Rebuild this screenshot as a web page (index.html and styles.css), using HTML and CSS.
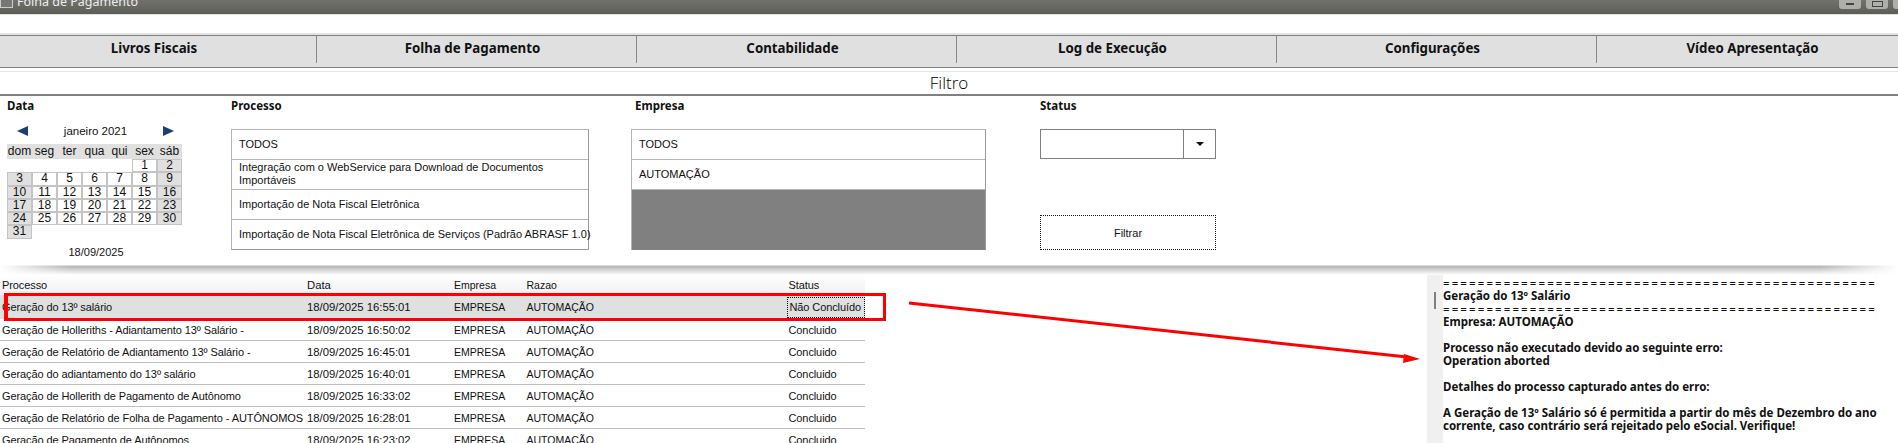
FILE: index.html
```html
<!DOCTYPE html>
<html lang="pt-BR">
<head>
  <meta charset="UTF-8" />
  <title>Folha de Pagamento</title>
  <link rel="stylesheet" href="styles.css">
</head>
<body>
  <div class="titlebar">
    <div class="title-left">
      <span class="app-icon"></span>
      <span>Folha de Pagamento</span>
    </div>
    <div class="win-buttons">
      <span class="win-btn"><span class="min-glyph"></span></span>
      <span class="win-btn"><span class="max-glyph"></span></span>
      <span class="win-btn"></span>
    </div>
  </div>

  <div class="menu">
    <div class="menu-item">Livros Fiscais</div>
    <div class="menu-item">Folha de Pagamento</div>
    <div class="menu-item">Contabilidade</div>
    <div class="menu-item">Log de Execução</div>
    <div class="menu-item">Configurações</div>
    <div class="menu-item">Vídeo Apresentação</div>
  </div>

  <div class="filter-title">Filtro</div>

  <div class="filter">
    <div class="col col-data">
      <div class="col-label">Data</div>
      <div class="cal-head">
        <span class="arrow-left"></span>
        <span>janeiro 2021</span>
        <span class="arrow-right"></span>
      </div>
      <div class="cal-grid">
        <div class="dow">dom</div><div class="dow">seg</div><div class="dow">ter</div><div class="dow">qua</div><div class="dow">qui</div><div class="dow">sex</div><div class="dow">sáb</div>
        <div class="blank"></div><div class="blank"></div><div class="blank"></div><div class="blank"></div><div class="blank"></div><div class="day">1</div><div class="day we">2</div>
        <div class="day we">3</div><div class="day">4</div><div class="day">5</div><div class="day">6</div><div class="day">7</div><div class="day">8</div><div class="day we">9</div>
        <div class="day we">10</div><div class="day">11</div><div class="day">12</div><div class="day">13</div><div class="day">14</div><div class="day">15</div><div class="day we">16</div>
        <div class="day we">17</div><div class="day">18</div><div class="day">19</div><div class="day">20</div><div class="day">21</div><div class="day">22</div><div class="day we">23</div>
        <div class="day we">24</div><div class="day">25</div><div class="day">26</div><div class="day">27</div><div class="day">28</div><div class="day">29</div><div class="day we">30</div>
        <div class="day we">31</div>
      </div>
      <div class="cal-date">18/09/2025</div>
    </div>

    <div class="col col-processo">
      <div class="col-label">Processo</div>
      <div class="listbox">
        <div class="list-row">TODOS</div>
        <div class="list-row">Integração com o WebService para Download de Documentos<br>Importáveis</div>
        <div class="list-row">Importação de Nota Fiscal Eletrônica</div>
        <div class="list-row">Importação de Nota Fiscal Eletrônica de Serviços (Padrão ABRASF 1.0)</div>
      </div>
    </div>

    <div class="col col-empresa">
      <div class="col-label">Empresa</div>
      <div class="listbox">
        <div class="list-row">TODOS</div>
        <div class="list-row">AUTOMAÇÃO</div>
      </div>
    </div>

    <div class="col col-status">
      <div class="col-label">Status</div>
      <div class="combo">
        <span class="combo-text"></span>
        <span class="combo-btn"><span class="combo-arrow"></span></span>
      </div>
      <div class="filter-btn">Filtrar</div>
    </div>
  </div>

  <div class="divider"></div>

  <div class="results">
    <div class="grid">
      <div class="row row-head">
        <span class="c-proc">Processo</span><span class="c-data">Data</span><span class="c-emp">Empresa</span><span class="c-raz">Razao</span><span class="c-st">Status</span>
      </div>
      <div class="row row-sel">
        <span class="c-proc">Geração do 13º salário</span><span class="c-data">18/09/2025 16:55:01</span><span class="c-emp">EMPRESA</span><span class="c-raz">AUTOMAÇÃO</span><span class="c-st"><span class="focus-cell">Não Concluído</span></span>
      </div>
      <div class="row">
        <span class="c-proc">Geração de Holleriths - Adiantamento 13º Salário -</span><span class="c-data">18/09/2025 16:50:02</span><span class="c-emp">EMPRESA</span><span class="c-raz">AUTOMAÇÃO</span><span class="c-st">Concluido</span>
      </div>
      <div class="row">
        <span class="c-proc">Geração de Relatório de Adiantamento 13º Salário -</span><span class="c-data">18/09/2025 16:45:01</span><span class="c-emp">EMPRESA</span><span class="c-raz">AUTOMAÇÃO</span><span class="c-st">Concluido</span>
      </div>
      <div class="row">
        <span class="c-proc">Geração do adiantamento do 13º salário</span><span class="c-data">18/09/2025 16:40:01</span><span class="c-emp">EMPRESA</span><span class="c-raz">AUTOMAÇÃO</span><span class="c-st">Concluido</span>
      </div>
      <div class="row">
        <span class="c-proc">Geração de Hollerith de Pagamento de Autônomo</span><span class="c-data">18/09/2025 16:33:02</span><span class="c-emp">EMPRESA</span><span class="c-raz">AUTOMAÇÃO</span><span class="c-st">Concluido</span>
      </div>
      <div class="row">
        <span class="c-proc">Geração de Relatório de Folha de Pagamento - AUTÔNOMOS</span><span class="c-data">18/09/2025 16:28:01</span><span class="c-emp">EMPRESA</span><span class="c-raz">AUTOMAÇÃO</span><span class="c-st">Concluido</span>
      </div>
      <div class="row">
        <span class="c-proc">Geração de Pagamento de Autônomos</span><span class="c-data">18/09/2025 16:23:02</span><span class="c-emp">EMPRESA</span><span class="c-raz">AUTOMAÇÃO</span><span class="c-st">Concluido</span>
      </div>
    </div>

    <div class="log">
      <div class="log-scroll"><span class="log-thumb"></span></div>
      <div class="log-text">
        <div class="log-sep">==================================================</div>
        <div>Geração do 13º Salário</div>
        <div class="log-sep">==================================================</div>
        <div>Empresa: AUTOMAÇÃO</div>
        <div>&nbsp;</div>
        <div>Processo não executado devido ao seguinte erro:</div>
        <div>Operation aborted</div>
        <div>&nbsp;</div>
        <div>Detalhes do processo capturado antes do erro:</div>
        <div>&nbsp;</div>
        <div>A Geração de 13º Salário só é permitida a partir do mês de Dezembro do ano<br>corrente, caso contrário será rejeitado pelo eSocial. Verifique!</div>
      </div>
    </div>
  </div>

  <!-- annotation drawn over the screenshot -->
  <div class="mark-box"></div>
  <svg class="mark-arrow" width="520" height="70" viewBox="0 0 520 70">
    <line x1="4" y1="5" x2="502" y2="59" stroke="#fe0000" stroke-width="3"/>
    <polygon points="515,61 499,56 498,65" fill="#fe0000"/>
  </svg>
</body>
</html>
```

FILE: styles.css
```css
html, body {
  margin: 0;
  padding: 0;
}

body {
  position: relative;
  width: 1898px;
  height: 443px;
  overflow: hidden;
  background-color: #fff;
  font-family: "Liberation Sans", sans-serif;
  font-size: 11px;
  color: #111;
}

.titlebar {
  display: flex;
  justify-content: space-between;
  height: 15px;
  background: linear-gradient(#72726d, #5d5d57);
  border-bottom: 1px solid #e0e0e0;
  box-sizing: border-box;
  color: #eee;
  font-family: "Noto Sans", sans-serif;
  font-size: 12.5px;
  overflow: hidden;
}

.title-left {
  display: flex;
  gap: 4px;
  height: 14px;
  margin-top: -5px;
  line-height: 14px;
}

.app-icon {
  width: 11px;
  height: 11px;
  border: 1px solid #ccc;
  background-color: #777;
}

.win-buttons {
  display: flex;
  gap: 5px;
  margin-right: -17px;
}

.win-btn {
  display: flex;
  justify-content: center;
  width: 22px;
  height: 9px;
  padding-top: 3px;
  background-color: #aeaeaa;
  border-radius: 0 0 3px 3px;
  box-sizing: border-box;
}

.min-glyph {
  width: 8px;
  height: 2px;
  background-color: #444;
}

.max-glyph {
  width: 9px;
  height: 4px;
  margin-top: -2px;
  border: 1px solid #444;
}

.menu {
  display: grid;
  grid-template-columns: 317px repeat(5, 320px);
  align-items: start;
  height: 33px;
  margin-top: 20px;
  background-color: #e0e0e0;
  border-top: 1px solid #808080;
  border-bottom: 1px solid #808080;
  box-shadow: 0 -2px 0 #e4e4e4;
  box-sizing: border-box;
  font-family: "Noto Sans", sans-serif;
  font-size: 13.3px;
  font-weight: bold;
}

.menu-item {
  display: flex;
  align-items: center;
  justify-content: center;
  height: 27px;
  padding: 0 8px 4px 0;
  border-right: 1px solid #888;
  box-sizing: border-box;
}

.filter-title {
  height: 25px;
  margin-top: 3px;
  font-family: "Open Sans", sans-serif;
  font-size: 17px;
  font-weight: 300;
  line-height: 22px;
  text-align: center;
  color: #000;
  border-top: 1px solid #e4e4e4;
  border-bottom: 2px solid #808080;
  box-sizing: border-box;
}

.filter {
  display: flex;
  height: 169px;
  padding-top: 2px;
  box-sizing: border-box;
}

.col {
  flex: none;
}

.col-label {
  height: 16px;
  font-family: "Noto Sans", sans-serif;
  font-size: 11.5px;
  font-weight: bold;
  line-height: 16px;
}

.col-data {
  width: 231px;
  padding-left: 7px;
  box-sizing: border-box;
}

.col-processo {
  width: 400px;
}

.col-empresa {
  width: 409px;
}

.col-empresa .col-label {
  padding-left: 4px;
}

.col-status {
  width: 176px;
}

.cal-head {
  display: flex;
  align-items: center;
  justify-content: space-between;
  width: 167px;
  height: 20px;
  margin-top: 7px;
  padding-left: 10px;
  box-sizing: border-box;
  font-size: 11.5px;
}

.arrow-left {
  border-top: 5px solid transparent;
  border-bottom: 5px solid transparent;
  border-right: 11px solid #1c3f73;
}

.arrow-right {
  border-top: 5px solid transparent;
  border-bottom: 5px solid transparent;
  border-left: 11px solid #1c3f73;
}

.cal-grid {
  display: grid;
  grid-template-columns: repeat(7, 25px);
  grid-template-rows: 15px repeat(6, 13.3px);
  width: 175px;
  margin-top: 3px;
  font-size: 12px;
  text-align: center;
}

.dow {
  background-color: #e0e0e0;
  line-height: 15px;
}

.day {
  line-height: 11px;
  background-color: #fff;
  border: 1px solid #c4c4c4;
  box-sizing: border-box;
}

.day.we {
  background-color: #e0e0e0;
}

.cal-date {
  width: 178px;
  margin-top: 6px;
  line-height: 14px;
  text-align: center;
}

.listbox {
  display: flex;
  flex-direction: column;
  width: 358px;
  height: 121px;
  margin-top: 15px;
  border: 1px solid #b4b4b4;
  border-right-color: #999;
  border-bottom-color: #999;
  background-color: #808080;
  box-sizing: border-box;
}

.list-row {
  display: flex;
  align-items: center;
  flex: none;
  height: 30px;
  padding: 0 7px;
  background-color: #fff;
  border-bottom: 1px solid #b4b4b4;
  box-sizing: border-box;
  line-height: 13px;
  white-space: nowrap;
}

.list-row:nth-child(2) {
  display: block;
  padding-top: 1px;
}

.col-processo .list-row:last-child {
  height: 29px;
  border-bottom: none;
}

.col-empresa .list-row:nth-child(2) {
  display: flex;
  padding-top: 0;
}

.col-empresa .listbox {
  width: 355px;
  border-bottom: none;
}

.combo {
  display: flex;
  width: 176px;
  height: 30px;
  margin-top: 15px;
  border: 1px solid #808080;
  box-sizing: border-box;
}

.combo-text {
  flex: 1;
}

.combo-btn {
  display: flex;
  align-items: center;
  justify-content: center;
  width: 31px;
  border-left: 1px solid #808080;
}

.combo-arrow {
  border-top: 4px solid #111;
  border-left: 4px solid transparent;
  border-right: 4px solid transparent;
}

.filter-btn {
  display: flex;
  align-items: center;
  justify-content: center;
  width: 176px;
  height: 35px;
  margin-top: 56px;
  border: 1px dotted #111;
  box-sizing: border-box;
}

.divider {
  height: 10px;
  background: linear-gradient(#b4b4b4, #fff);
  border-top: 1px solid #dcdcdc;
  box-sizing: border-box;
  -webkit-mask-image: linear-gradient(to right, transparent, #000 70px, #000 1820px, transparent);
  mask-image: linear-gradient(to right, transparent, #000 70px, #000 1820px, transparent);
}

.results {
  display: flex;
  justify-content: space-between;
}

.grid {
  width: 865px;
}

.row {
  display: flex;
  align-items: center;
  height: 22px;
  border-bottom: 1px solid #c0c0c0;
  box-sizing: border-box;
  white-space: nowrap;
}

.row-head {
  height: 20px;
  padding-bottom: 1px;
  background: linear-gradient(#fff, #f0f0f0);
  border-bottom: none;
}

.row-sel {
  height: 24px;
  background-color: #e0e0e0;
  border-bottom: none;
}

.row span {
  flex: none;
}

.c-proc {
  width: 307px;
  padding-left: 2px;
  box-sizing: border-box;
  letter-spacing: -0.1px;
}

.c-data {
  width: 147px;
  font-size: 11.3px;
}

.c-emp {
  width: 72.5px;
  font-size: 10.5px;
}

.c-raz {
  width: 262px;
  font-size: 10.5px;
}

.c-st {
  width: 76px;
  letter-spacing: -0.1px;
}

.focus-cell {
  display: block;
  margin-left: -2px;
  padding: 2px 0 2px 2px;
  border: 1px dotted #111;
  box-sizing: border-box;
  height: 21px;
  line-height: 15px;
}

.log {
  display: flex;
  width: 471px;
}

.log-scroll {
  position: relative;
  flex: none;
  width: 16px;
  height: 168px;
  background-color: #f0f0f0;
}

.log-thumb {
  position: absolute;
  top: 17px;
  left: 7px;
  width: 2px;
  height: 17px;
  background-color: #808080;
}

.log-text {
  flex: 1;
  padding-top: 1px;
  font-family: "Noto Sans", sans-serif;
  font-size: 11.5px;
  font-weight: bold;
  line-height: 13px;
  overflow: hidden;
  white-space: nowrap;
}

.log-sep {
  width: 448px;
  font-weight: normal;
  letter-spacing: 2.1px;
  overflow: hidden;
}

.mark-box {
  position: absolute;
  left: 4px;
  top: 293px;
  width: 882px;
  height: 28px;
  border: 3px solid #fe0000;
  border-left-width: 4px;
  box-sizing: border-box;
}

.mark-arrow {
  position: absolute;
  left: 905px;
  top: 298px;
}
```
